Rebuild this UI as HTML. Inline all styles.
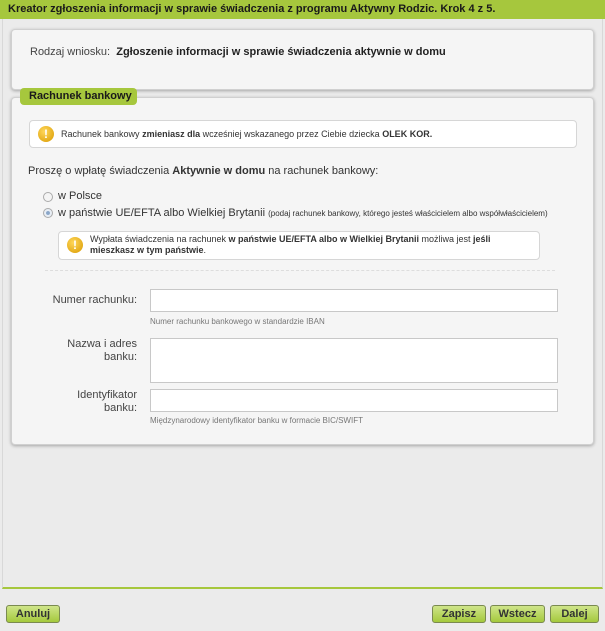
<!DOCTYPE html>
<html><head><meta charset="utf-8"><style>
*{box-sizing:border-box;margin:0;padding:0}
body{width:605px;height:631px;background:#ebebeb;font-family:"Liberation Sans",sans-serif;color:#222;position:relative;overflow:hidden;font-size:11px}
.a{position:absolute;white-space:nowrap}
.hdr{left:0;top:0;width:605px;height:19px;background:#a6c73d;font-weight:bold;font-size:11px;padding:3px 0 0 8px;color:#1a1a1a}
.frame{left:2px;top:19px;width:601px;height:570px;border-left:1px solid #d8d8d8;border-right:1px solid #d8d8d8;border-bottom:2px solid #a6c73d}
.box{background:#f5f5f5;border:1px solid #d0d0d0;border-radius:4px;box-shadow:0 1px 3px rgba(0,0,0,.3)}
.info{background:#fff;border:1px solid #d6d6d6;border-radius:4px}
.ic{width:16px;height:16px;border-radius:50%;background:radial-gradient(circle at 40% 35%,#ffd75a,#d99a00);color:#fff;font-weight:bold;font-size:12px;text-align:center;line-height:16px}
.inp{background:#fff;border:1px solid #c8c8c8}
.lbl{font-size:11px;color:#444;text-align:right}
.hint{font-size:8px;color:#777}
.btn{top:605px;height:18px;border:1px solid #7a8a50;border-radius:3px;background:linear-gradient(#cfe58a,#a4c93d);font-weight:bold;font-size:11px;text-align:center;line-height:16px;color:#333}
.rad{width:10px;height:10px;border-radius:50%;border:1px solid #aaa;background:#f4f4f4}
</style></head><body>
<div class="a hdr">Kreator zgłoszenia informacji w sprawie świadczenia z programu Aktywny Rodzic. Krok 4 z 5.</div>
<div class="a frame"></div>
<div class="a box" style="left:11px;top:29px;width:583px;height:61px"></div>
<div class="a" style="left:30px;top:46px;font-size:11px;color:#444">Rodzaj wniosku:&nbsp; <b style="color:#222">Zgłoszenie informacji w sprawie świadczenia aktywnie w domu</b></div>
<div class="a box" style="left:11px;top:97px;width:583px;height:348px"></div>
<div class="a" style="left:20px;top:88px;width:117px;height:17px;background:#a6c73d;border-radius:4px;font-weight:bold;font-size:11px;padding:2px 0 0 9px;color:#1a1a1a">Rachunek bankowy</div>
<div class="a info" style="left:29px;top:120px;width:548px;height:28px"></div>
<div class="a ic" style="left:38px;top:126px">!</div>
<div class="a" style="left:61px;top:129px;font-size:9px;color:#333">Rachunek bankowy <b>zmieniasz dla</b> wcześniej wskazanego przez Ciebie dziecka <b>OLEK KOR.</b></div>
<div class="a" style="left:28px;top:165px;font-size:11px;color:#333">Proszę o wpłatę świadczenia <b>Aktywnie w domu</b> na rachunek bankowy:</div>
<div class="a rad" style="left:43px;top:192px"></div>
<div class="a" style="left:58px;top:190px;font-size:11px;color:#333">w Polsce</div>
<div class="a rad" style="left:43px;top:208px;background:radial-gradient(circle,#8aa6c8 30%,#e8eef5 40%)"></div>
<div class="a" style="left:58px;top:207px;font-size:11px;color:#333">w państwie UE/EFTA albo Wielkiej Brytanii <span style="font-size:8px">(podaj rachunek bankowy, którego jesteś właścicielem albo współwłaścicielem)</span></div>
<div class="a info" style="left:58px;top:231px;width:482px;height:29px"></div>
<div class="a ic" style="left:67px;top:237px">!</div>
<div class="a" style="left:90px;top:234px;font-size:9px;color:#333;line-height:11px">Wypłata świadczenia na rachunek <b>w państwie UE/EFTA albo w Wielkiej Brytanii</b> możliwa jest <b>jeśli<br>mieszkasz w tym państwie</b>.</div>
<div class="a" style="left:45px;top:270px;width:510px;border-top:1px dashed #ddd"></div>
<div class="a lbl" style="left:40px;top:294px;width:97px">Numer rachunku:</div>
<div class="a inp" style="left:150px;top:289px;width:408px;height:23px"></div>
<div class="a hint" style="left:150px;top:317px">Numer rachunku bankowego w standardzie IBAN</div>
<div class="a lbl" style="left:40px;top:338px;width:97px;line-height:13px">Nazwa i adres<br>banku:</div>
<div class="a inp" style="left:150px;top:338px;width:408px;height:45px"></div>
<div class="a lbl" style="left:40px;top:389px;width:97px;line-height:13px">Identyfikator<br>banku:</div>
<div class="a inp" style="left:150px;top:389px;width:408px;height:23px"></div>
<div class="a hint" style="left:150px;top:416px">Międzynarodowy identyfikator banku w formacie BIC/SWIFT</div>
<div class="a btn" style="left:6px;width:54px">Anuluj</div>
<div class="a btn" style="left:432px;width:54px">Zapisz</div>
<div class="a btn" style="left:490px;width:55px">Wstecz</div>
<div class="a btn" style="left:550px;width:49px">Dalej</div>
</body></html>
